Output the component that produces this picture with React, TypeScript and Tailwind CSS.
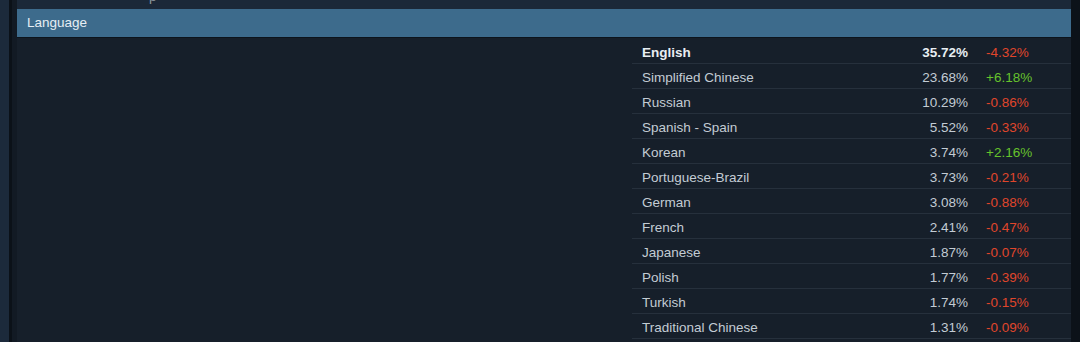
import React from "react";

const rows = [
  { name: "English", pct: "35.72%", chg: "-4.32%", bold: true },
  { name: "Simplified Chinese", pct: "23.68%", chg: "+6.18%" },
  { name: "Russian", pct: "10.29%", chg: "-0.86%" },
  { name: "Spanish - Spain", pct: "5.52%", chg: "-0.33%" },
  { name: "Korean", pct: "3.74%", chg: "+2.16%" },
  { name: "Portuguese-Brazil", pct: "3.73%", chg: "-0.21%" },
  { name: "German", pct: "3.08%", chg: "-0.88%" },
  { name: "French", pct: "2.41%", chg: "-0.47%" },
  { name: "Japanese", pct: "1.87%", chg: "-0.07%" },
  { name: "Polish", pct: "1.77%", chg: "-0.39%" },
  { name: "Turkish", pct: "1.74%", chg: "-0.15%" },
  { name: "Traditional Chinese", pct: "1.31%", chg: "-0.09%" },
];

export default function App() {
  return (
    <div
      className="flex h-[342px] w-full overflow-hidden bg-[#1b2838] text-[13.5px]"
      style={{ fontFamily: '"Liberation Sans", Arial, sans-serif' }}
    >
      <div className="w-[9px] shrink-0 bg-[#1c2a3b]" />
      <div className="w-[3px] shrink-0 bg-[#0b1118]" />
      <div className="w-[5px] shrink-0 bg-[#121a24]" />
      <div className="flex min-w-0 flex-1 flex-col">
        <div className="h-[9px] shrink-0 overflow-hidden bg-[#1b2838]">
          <div className="-mt-[11px] ml-[132px] leading-[16px] text-[#8f98a0]">p</div>
        </div>
        <div className="flex h-[28px] shrink-0 items-center bg-[#3d6b8c] pl-[10px] pt-px text-[#e6eef4]">
          Language
        </div>
        <div className="h-px shrink-0 bg-[#0d141c]" />
        <div className="flex flex-1 bg-[#161f2a]">
          <div className="ml-auto w-[439px] pt-px">
            {rows.map((r) => (
              <div
                key={r.name}
                className="flex h-[25px] items-center border-b border-[#26303c] pt-[4px] leading-none"
              >
                <div
                  className={
                    r.bold
                      ? "flex-1 pl-[10px] font-bold text-[#e8eef3]"
                      : "flex-1 pl-[10px] text-[#c3ccd4]"
                  }
                >
                  {r.name}
                </div>
                <div
                  className={
                    r.bold
                      ? "pr-[18px] text-right font-bold text-[#e8eef3]"
                      : "pr-[18px] text-right text-[#c3ccd4]"
                  }
                >
                  {r.pct}
                </div>
                <div
                  className={
                    r.chg.startsWith("+")
                      ? "w-[85px] text-[#66c22c]"
                      : "w-[85px] text-[#e0462b]"
                  }
                >
                  {r.chg}
                </div>
              </div>
            ))}
          </div>
        </div>
      </div>
      <div className="w-[9px] shrink-0 bg-[#0c1219]" />
    </div>
  );
}
